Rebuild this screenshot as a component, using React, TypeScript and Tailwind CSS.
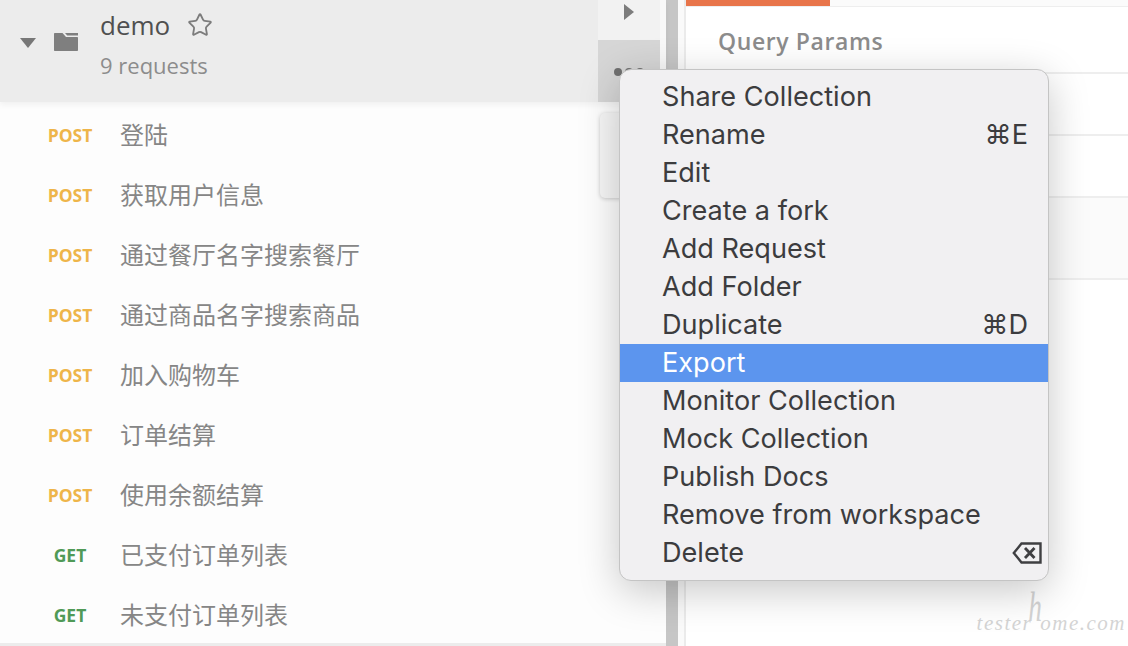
import { Star } from "lucide-react";

const requests = [
  { method: "POST", name: "登陆" },
  { method: "POST", name: "获取用户信息" },
  { method: "POST", name: "通过餐厅名字搜索餐厅" },
  { method: "POST", name: "通过商品名字搜索商品" },
  { method: "POST", name: "加入购物车" },
  { method: "POST", name: "订单结算" },
  { method: "POST", name: "使用余额结算" },
  { method: "GET", name: "已支付订单列表" },
  { method: "GET", name: "未支付订单列表" },
];

const menu: { label: string; shortcut?: string; active?: boolean; del?: boolean }[] = [
  { label: "Share Collection" },
  { label: "Rename", shortcut: "⌘E" },
  { label: "Edit" },
  { label: "Create a fork" },
  { label: "Add Request" },
  { label: "Add Folder" },
  { label: "Duplicate", shortcut: "⌘D" },
  { label: "Export", active: true },
  { label: "Monitor Collection" },
  { label: "Mock Collection" },
  { label: "Publish Docs" },
  { label: "Remove from workspace" },
  { label: "Delete", del: true },
];

function FolderIcon() {
  return (
    <svg width="24" height="18" viewBox="0 0 24 18" className="text-[#7f7f7f]">
      <path d="M0 1C0 .4.4 0 1 0H8.5l3.5 4H23c.6 0 1 .4 1 1v12c0 .6-.4 1-1 1H1c-.6 0-1-.4-1-1z" fill="currentColor" />
      <path d="M11 0H24V2.6H13.2z" fill="currentColor" />
    </svg>
  );
}

function DeleteKey() {
  return (
    <svg width="30" height="22" viewBox="0 0 30 22" fill="none" stroke="#3f3f42" strokeWidth="2.4">
      <path d="M28.5 1.5H9.5L1.8 11l7.7 9.5h19z" />
      <path d="M13 6l9.5 10M22.5 6L13 16" strokeWidth="2.8" />
    </svg>
  );
}

export default function App() {
  return (
    <div className="relative flex h-[646px] w-[1128px] overflow-hidden bg-white font-['Open_Sans','Noto_Sans_CJK_SC',sans-serif]">
      {/* sidebar */}
      <div className="flex w-[666px] shrink-0 flex-col">
        <div className="z-10 flex h-[102px] bg-[#ececec] shadow-[0_3px_6px_rgba(0,0,0,0.05)]">
          <div className="flex w-[598px] items-start">
            <div className="ml-[20px] mt-[38px] h-0 w-0 border-x-[8px] border-t-[10px] border-x-transparent border-t-[#777]" />
            <div className="ml-[18px] mt-[33px]">
              <FolderIcon />
            </div>
            <div className="ml-[22px] mt-[7px]">
              <div className="flex items-center">
                <span className="text-[26px] leading-[36px] text-[#505050]">demo</span>
                <Star size={26} strokeWidth={1.7} className="ml-[17px] text-[#7c7c7c]" />
              </div>
              <div className="mt-[7px] text-[22px] leading-[30px] text-[#8c8c8c]">9 requests</div>
            </div>
          </div>
          <div className="flex w-[62px] flex-col">
            <div className="flex h-[40px] justify-center bg-[#f2f2f2] pt-[4px]">
              <div className="h-0 w-0 border-y-[8px] border-l-[10px] border-y-transparent border-l-[#7c7c7c]" />
            </div>
            <div className="flex h-[62px] justify-center gap-[3px] bg-[#d6d6d6] pt-[28px]">
              <span className="h-[8px] w-[8px] rounded-full bg-[#707070]" />
              <span className="h-[8px] w-[8px] rounded-full bg-[#707070]" />
              <span className="h-[8px] w-[8px] rounded-full bg-[#707070]" />
            </div>
          </div>
          <div className="w-[6px] bg-[#f8f8f8]" />
        </div>
        <div className="relative flex-1 bg-[#fdfdfd] pt-[3px]">
          {requests.map((r) => (
            <div key={r.name} className="flex h-[60px] items-center">
              <span
                className={`w-[120px] pl-[20px] text-center text-[17.5px] font-bold ${
                  r.method === "POST" ? "text-[#eeb54a]" : "text-[#509a57]"
                }`}
              >
                {r.method}
              </span>
              <span className="text-[24px] text-[#868686]">{r.name}</span>
            </div>
          ))}
          <div className="absolute left-[600px] top-[11px] h-[85px] w-[30px] rounded-[5px] bg-[#f6f6f6] shadow-[0_1px_4px_rgba(0,0,0,0.2)]" />
          <div className="absolute inset-x-0 bottom-0 h-[3px] bg-[#ececec]" />
        </div>
      </div>
      {/* divider */}
      <div className="w-[12px] shrink-0 bg-[#c6c6c6]" />
      <div className="w-[8px] shrink-0 border-r-2 border-[#ebebeb] bg-[#fafafa]" />
      {/* right panel */}
      <div className="flex-1">
        <div className="h-[7px] border-b border-[#eeeeee] bg-[#fbfbfb]">
          <div className="h-[6px] w-[144px] bg-[#e8754a]" />
        </div>
        <div className="flex h-[67px] items-center border-b-2 border-[#eeeeee] pl-[32px] pt-[4px] text-[23px] font-semibold tracking-[0.6px] text-[#8c8c8c]">
          Query Params
        </div>
        <div className="h-[62px] border-b-2 border-[#eeeeee]" />
        <div className="h-[62px] border-b-2 border-[#eeeeee]" />
        <div className="h-[82px] border-b-2 border-[#eeeeee] bg-[#fbfbfb]" />
      </div>
      {/* context menu */}
      <div className="absolute left-[619px] top-[69px] z-20 w-[430px] rounded-[12px] border border-[#c4c4c4] bg-[#f1f0f2] py-[8px] font-['Inter','Liberation_Sans',sans-serif] shadow-[0_10px_40px_rgba(0,0,0,0.22)]">
        {menu.map((m) => (
          <div
            key={m.label}
            className={`flex h-[38px] items-center justify-between pl-[42px] pr-[20px] text-[27.1px] ${
              m.active ? "bg-[#5c95ee] text-white" : "text-[#3c3c3e]"
            }`}
          >
            <span>{m.label}</span>
            {m.shortcut && <span>{m.shortcut}</span>}
            {m.del && (
              <span className="-mr-[14px]">
                <DeleteKey />
              </span>
            )}
          </div>
        ))}
      </div>
      {/* watermark */}
      <div className="absolute right-[2px] top-[608px] font-['Liberation_Serif',serif] text-[21px] italic tracking-[1.5px] text-[#d4d4d4]">
        tester<span className="mx-[-2px] inline-block origin-bottom scale-x-[1.3] scale-y-[2]">h</span>ome.com
      </div>
    </div>
  );
}
